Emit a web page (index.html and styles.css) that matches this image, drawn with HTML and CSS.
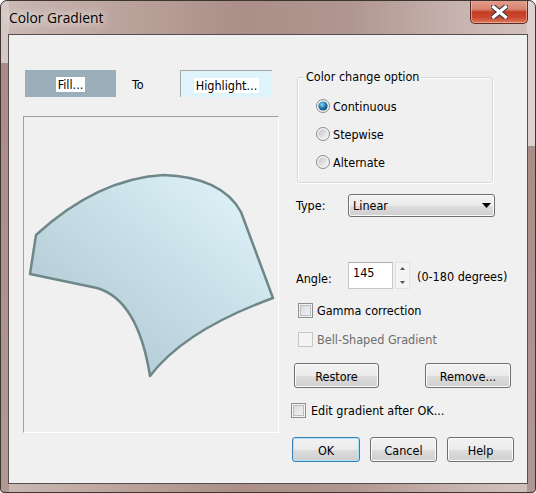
FILE: index.html
```html
<!DOCTYPE html>
<html>
<head>
<meta charset="utf-8">
<title>Color Gradient</title>
<link rel="stylesheet" href="styles.css">
</head>
<body>
<div class="window">
  <div class="titlebar">
    <span class="title">Color Gradient</span>
    <div class="close">
      <svg width="17" height="14" viewBox="0 0 17 14">
        <path d="M2.5 2 L14.5 12 M14.5 2 L2.5 12" stroke="#3a3a48" stroke-width="5.5" stroke-linecap="square"/>
        <path d="M2.5 2 L14.5 12 M14.5 2 L2.5 12" stroke="#ffffff" stroke-width="3.2" stroke-linecap="square"/>
      </svg>
    </div>
  </div>
  <div class="client">
    <div class="left">
      <div class="swatches">
        <div class="swatch fill"><span class="swatch-label">Fill...</span></div>
        <span class="to">To</span>
        <div class="swatch highlight"><span class="swatch-label">Highlight...</span></div>
      </div>
      <div class="preview">
        <svg width="254" height="315" viewBox="0 0 254 315">
          <defs>
            <linearGradient id="g" x1="1" y1="0" x2="0" y2="1">
              <stop offset="0" stop-color="#e2f6fc"/>
              <stop offset="1" stop-color="#a9c2cd"/>
            </linearGradient>
          </defs>
          <path d="M12 118 L6 157 L73 171 Q114 183 126 259 Q161 213 249 181 L217 95 Q198 60 139 58 Q73 62 12 118 Z" fill="url(#g)" stroke="#6e8788" stroke-width="2.5" stroke-linejoin="round"/>
        </svg>
      </div>
    </div>
    <div class="right">
      <fieldset class="group">
        <legend>Color change option</legend>
        <div class="radio-row">
          <svg class="radio" width="14" height="14" viewBox="0 0 14 14">
            <defs>
              <linearGradient id="rb" x1="0" y1="0" x2="1" y2="1">
                <stop offset="0" stop-color="#c4c4c4"/>
                <stop offset="1" stop-color="#f7f7f7"/>
              </linearGradient>
              <radialGradient id="rd" cx="0.4" cy="0.35" r="0.7">
                <stop offset="0" stop-color="#8fe0ff"/>
                <stop offset="0.5" stop-color="#2a7fb8"/>
                <stop offset="1" stop-color="#0c3f66"/>
              </radialGradient>
            </defs>
            <circle cx="7" cy="7" r="6.5" fill="#f2f2f2" stroke="#8a8a8a"/>
            <circle cx="7" cy="7" r="4.6" fill="url(#rd)"/>
          </svg>
          <span>Continuous</span>
        </div>
        <div class="radio-row">
          <svg class="radio" width="14" height="14" viewBox="0 0 14 14">
            <circle cx="7" cy="7" r="6.5" fill="#f2f2f2" stroke="#8a8a8a"/>
            <circle cx="7" cy="7" r="4.6" fill="url(#rb)"/>
          </svg>
          <span>Stepwise</span>
        </div>
        <div class="radio-row">
          <svg class="radio" width="14" height="14" viewBox="0 0 14 14">
            <circle cx="7" cy="7" r="6.5" fill="#f2f2f2" stroke="#8a8a8a"/>
            <circle cx="7" cy="7" r="4.6" fill="url(#rb)"/>
          </svg>
          <span>Alternate</span>
        </div>
      </fieldset>

      <div class="field-row type-row">
        <span class="field-label">Type:</span>
        <div class="select">
          <span>Linear</span>
          <svg width="9" height="5" viewBox="0 0 9 5"><path d="M0 0 L9 0 L4.5 5 Z" fill="#000"/></svg>
        </div>
      </div>

      <div class="field-row angle-row">
        <span class="field-label angle-label">Angle:</span>
        <div class="number-input">145</div>
        <div class="spinner">
          <svg width="15" height="27" viewBox="0 0 15 27">
            <path d="M5 8 L7.5 5 L10 8 Z" fill="#555"/>
            <path d="M5 19 L10 19 L7.5 22 Z" fill="#555"/>
          </svg>
        </div>
        <span class="hint">(0-180 degrees)</span>
      </div>

      <div class="check-row gamma-row">
        <span class="checkbox"></span>
        <span>Gamma correction</span>
      </div>
      <div class="check-row bell-row disabled">
        <span class="checkbox"></span>
        <span>Bell-Shaped Gradient</span>
      </div>

      <div class="button-row action-row">
        <div class="btn restore">Restore</div>
        <div class="btn remove">Remove...</div>
      </div>

      <div class="check-row edit-row">
        <span class="checkbox"></span>
        <span>Edit gradient after OK...</span>
      </div>

      <div class="button-row dialog-row">
        <div class="btn default">OK</div>
        <div class="btn">Cancel</div>
        <div class="btn">Help</div>
      </div>
    </div>
  </div>
</div>
</body>
</html>
```

FILE: styles.css
```css
html, body {
  margin: 0;
  padding: 0;
  background: #ffffff;
}

body {
  font-family: "DejaVu Sans Condensed", "DejaVu Sans", sans-serif;
  font-size: 12.5px;
  color: #000;
}

.window {
  width: 536px;
  height: 493px;
  box-sizing: border-box;
  border: 1px solid #3e3432;
  border-radius: 7px 7px 4px 4px;
  background:
    linear-gradient(#d6c9c5, #d6c9c5) 0 0 / 8px 62px no-repeat,
    linear-gradient(#a98c86, #b39b95) 0 62px / 8px 100% no-repeat,
    linear-gradient(#ddd2cf, #ddd2cf) 100% 0 / 8px 145px no-repeat,
    linear-gradient(#a98e88, #b29b95) 100% 145px / 8px 100% no-repeat,
    linear-gradient(90deg, #cbb9b4 0%, #b9a19a 25%, #ab8f88 45%, #b09690 65%, #c6b2ad 85%, #d2c3bf 100%);
  display: flex;
  flex-direction: column;
  overflow: hidden;
}

.titlebar {
  height: 33px;
  flex: none;
  display: flex;
  justify-content: space-between;
  align-items: flex-start;
  padding: 0 7px 0 8px;
}

.title {
  font-family: "Open Sans", "Noto Sans", sans-serif;
  font-size: 13.8px;
  line-height: 20px;
  margin-top: 7px;
  color: #000;
  text-shadow: 0 0 8px rgba(255,255,255,0.9), 0 0 12px rgba(255,255,255,0.7);
}

.close {
  width: 58px;
  height: 24px;
  margin-top: -1px;
  box-sizing: border-box;
  border: 1px solid #5a2e27;
  border-top: none;
  border-radius: 0 0 5px 5px;
  background: linear-gradient(#e4a08f 0%, #d6846f 40%, #c33d26 52%, #cb472d 75%, #dd7a5a 100%);
  box-shadow: inset 0 0 0 1px rgba(255,210,200,0.5);
  display: flex;
  align-items: center;
  justify-content: center;
}

.client {
  flex: 1;
  margin: 0 7px 8px 7px;
  box-sizing: border-box;
  border: 1px solid #585050;
  background: #f0f0f0;
  display: flex;
  padding: 35px 0 0 14px;
}

/* left column */
.left {
  width: 256px;
  flex: none;
}

.swatches {
  height: 27px;
  display: flex;
  align-items: stretch;
}

.swatch {
  box-sizing: border-box;
  height: 27px;
  display: flex;
  align-items: center;
  justify-content: center;
  padding-top: 2px;
}

.fill {
  margin-left: 2px;
  width: 91px;
  background: #9aafba;
}

.highlight {
  width: 92px;
  background: #dff4fa;
  border-top: 1px solid #a7a7a7;
  border-left: 1px solid #a7a7a7;
}

.swatch-label {
  background: #fff;
  line-height: 15px;
  padding: 0 2px;
}

.to {
  width: 64px;
  box-sizing: border-box;
  padding-left: 16px;
  display: flex;
  align-items: center;
  padding-top: 2px;
}

.preview {
  margin-top: 19px;
  width: 256px;
  height: 317px;
  box-sizing: border-box;
  border: 1px solid;
  border-color: #a0a0a0 #ffffff #ffffff #a0a0a0;
}

.preview svg {
  display: block;
}

/* right column */
.right {
  margin-left: 12px;
  width: 224px;
  flex: none;
}

.group {
  margin: 0 0 0 6px;
  width: 196px;
  box-sizing: border-box;
  border: 1px solid #d5dadd;
  border-radius: 3px;
  padding: 8px 0 6px 0;
  box-shadow: inset 1px 1px 0 #fff, 1px 1px 0 #fff;
}

.group legend {
  margin-left: 6px;
  padding: 0 2px;
  line-height: 14px;
}

.radio-row {
  height: 28px;
  display: flex;
  align-items: center;
  padding-left: 18px;
}

.radio {
  display: block;
  margin-right: 3px;
  flex: none;
}

.field-row {
  display: flex;
  align-items: center;
}

.field-label {
  width: 52px;
  margin-left: 5px;
  flex: none;
}

.type-row {
  margin-top: 11px;
  height: 23px;
}

.select {
  width: 147px;
  height: 23px;
  box-sizing: border-box;
  border: 1px solid #707070;
  border-radius: 3px;
  background: linear-gradient(#f2f2f2 0%, #ebebeb 50%, #dddddd 51%, #cfcfcf 100%);
  box-shadow: inset 0 0 0 1px #fbfbfb;
  display: flex;
  align-items: center;
  justify-content: space-between;
  padding: 0 3px 0 4px;
}

.select svg {
  display: block;
}

.angle-row {
  margin-top: 45px;
  height: 27px;
}

.angle-label {
  padding-top: 5px;
}

.number-input {
  width: 45px;
  height: 27px;
  box-sizing: border-box;
  border: 1px solid #c5c9cf;
  border-top-color: #abadb3;
  background: #fff;
  padding: 3px 0 0 4px;
  line-height: 14px;
  align-self: stretch;
}

.spinner {
  margin-left: 2px;
  width: 15px;
  height: 27px;
  box-sizing: border-box;
  border: 1px solid #e3e3e3;
  background: #f4f4f4;
}

.spinner svg {
  display: block;
  margin: -1px;
}

.hint {
  margin-left: 7px;
  padding-top: 2px;
}

.check-row {
  display: flex;
  align-items: center;
  height: 15px;
}

.checkbox {
  width: 15px;
  height: 15px;
  box-sizing: border-box;
  border: 1px solid #8e8f8f;
  background: linear-gradient(135deg, #d2d5d9 0%, #e9eaeb 60%, #f6f6f6 100%);
  box-shadow: inset 0 0 0 1px #f4f4f4, inset 0 0 0 2px #b9bdc2;
  flex: none;
  margin-right: 4px;
}

.gamma-row {
  margin-top: 14px;
  margin-left: 7px;
}

.bell-row {
  margin-top: 14px;
  margin-left: 7px;
}

.disabled {
  color: #6d6d6d;
}

.disabled .checkbox {
  border-color: #c6c6c6;
  background: #f4f4f4;
  box-shadow: none;
}

.button-row {
  display: flex;
}

.btn {
  width: 67px;
  height: 25px;
  box-sizing: border-box;
  border: 1px solid #707070;
  border-radius: 3px;
  background: linear-gradient(#f2f2f2 0%, #ebebeb 50%, #dddddd 51%, #cfcfcf 100%);
  box-shadow: inset 0 0 0 1px #fcfcfc;
  display: flex;
  align-items: center;
  justify-content: center;
  padding-top: 1px;
}

.action-row {
  margin-top: 16px;
}

.restore {
  width: 85px;
  margin-left: 3px;
}

.remove {
  width: 86px;
  margin-left: 46px;
}

.edit-row {
  margin-top: 15px;
}

.edit-row .checkbox {
  margin-right: 5px;
}

.dialog-row {
  margin-top: 19px;
  gap: 10px;
  margin-left: 1px;
}

.btn.default {
  width: 68px;
  border-color: #3c7fb1;
  box-shadow: inset 0 0 0 1px #a9e2fb;
}
```
